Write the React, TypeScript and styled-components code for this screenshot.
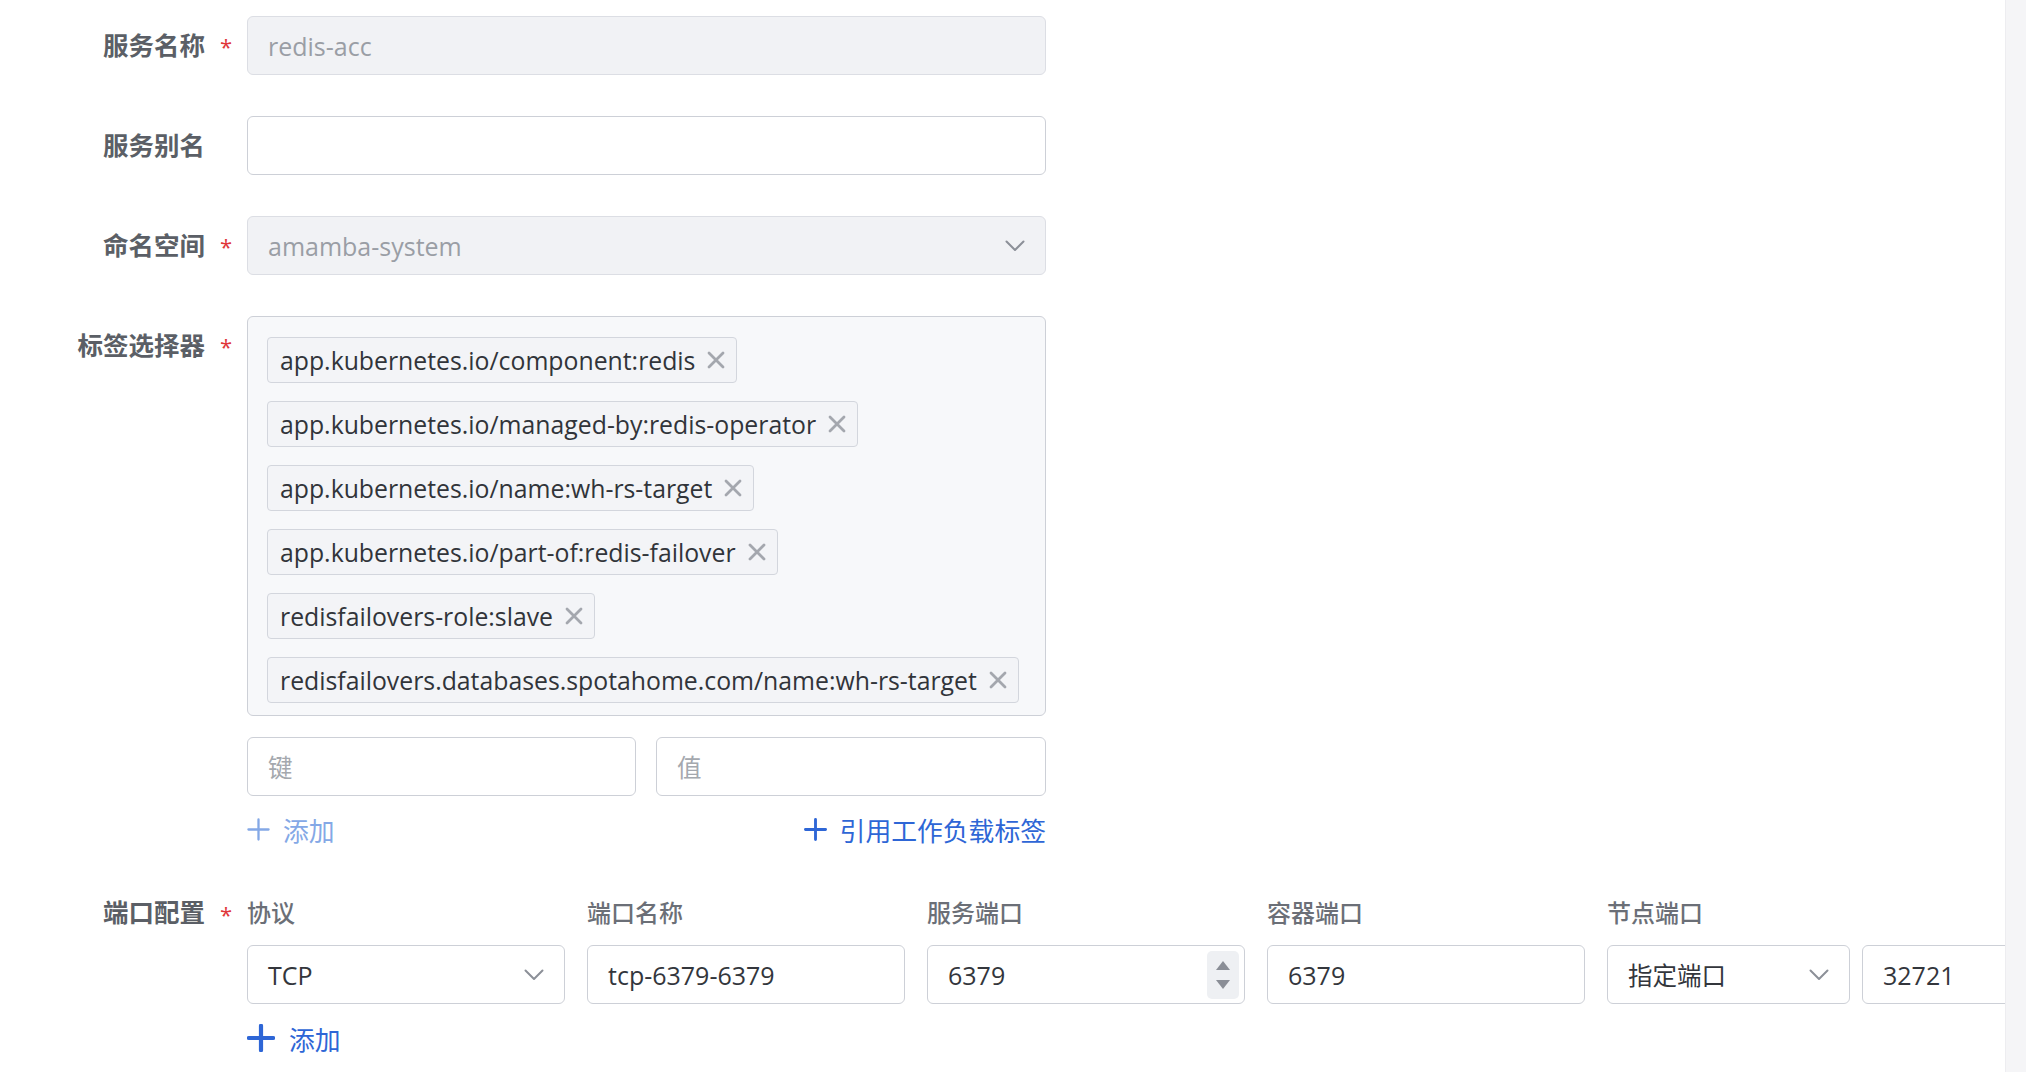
import React from "react";
import styled, { createGlobalStyle } from "styled-components";

const GlobalStyle = createGlobalStyle`
  html, body { margin: 0; padding: 0; background: #ffffff; }
  body {
    font-family: "Open Sans", "Noto Sans CJK SC", sans-serif;
    -webkit-font-smoothing: antialiased;
  }
  * { box-sizing: border-box; }
`;

const Page = styled.div`
  display: flex;
  width: 2026px;
  height: 1072px;
  overflow: hidden;
  background: #fff;
`;

const Main = styled.div`
  flex: 1;
  min-width: 0;
  overflow: hidden;
  padding-top: 16px;
`;

const ScrollTrack = styled.div`
  width: 21px;
  flex: none;
  background: #f5f5f7;
  border-left: 1px solid #ededf0;
`;

const Row = styled.div<{ $mb?: number }>`
  display: grid;
  grid-template-columns: 247px max-content;
  margin-bottom: ${(p) => p.$mb ?? 41}px;
`;

const LabelCell = styled.div<{ $h?: number }>`
  display: flex;
  justify-content: flex-end;
  align-items: center;
  height: ${(p) => p.$h ?? 59}px;
  padding-bottom: 5px;
`;

const LabelText = styled.span`
  font-family: "Noto Sans CJK SC", sans-serif;
  font-size: 25.5px;
  font-weight: 700;
  color: #5b5f66;
`;

const Star = styled.span<{ $show?: boolean }>`
  width: 42px;
  padding-left: 15px;
  font-size: 22px;
  color: #e0363a;
  visibility: ${(p) => (p.$show ? "visible" : "hidden")};
  line-height: 1;
  padding-top: 6px;
`;

const Field = styled.div<{ $disabled?: boolean; $w?: number }>`
  width: ${(p) => p.$w ?? 799}px;
  height: 59px;
  display: flex;
  align-items: center;
  padding: 0 20px;
  border: 1.5px solid ${(p) => (p.$disabled ? "#dcdee4" : "#cdd0d7")};
  border-radius: 6px;
  background: ${(p) => (p.$disabled ? "#f1f2f5" : "#ffffff")};
  font-size: 25px;
  color: ${(p) => (p.$disabled ? "#9a9ea5" : "#33363c")};
  flex: none;
`;

const FieldText = styled.span`
  flex: 1;
  white-space: nowrap;
`;

const Placeholder = styled.span`
  flex: 1;
  font-family: "Noto Sans CJK SC", sans-serif;
  color: #a4a8ae;
  font-size: 24.5px;
`;

const CjkValue = styled.span`
  flex: 1;
  font-family: "Noto Sans CJK SC", sans-serif;
  color: #33363c;
  font-size: 24.5px;
`;

const Column = styled.div`
  display: flex;
  flex-direction: column;
`;

const TagBox = styled.div`
  width: 799px;
  border: 1.5px solid #cdd0d7;
  border-radius: 6px;
  background: #f7f8fa;
  padding: 20px 19px 12px;
  display: flex;
  flex-direction: column;
  align-items: flex-start;
  gap: 18px;
`;

const Tag = styled.div`
  display: inline-flex;
  align-items: center;
  height: 46px;
  padding: 0 11px 0 12px;
  gap: 12px;
  border: 1.5px solid #d3d6dd;
  border-radius: 4px;
  background: #f3f4f7;
  font-size: 24.8px;
  color: #31343a;
  white-space: nowrap;
`;

const KVRow = styled.div`
  display: flex;
  gap: 20px;
  margin-top: 21px;
`;

const LinkRow = styled.div`
  display: flex;
  justify-content: space-between;
  align-items: center;
  height: 40px;
  margin-top: 13px;
  width: 799px;
`;

const Link = styled.span<{ $muted?: boolean; $gap?: number }>`
  display: inline-flex;
  align-items: center;
  gap: ${(p) => p.$gap ?? 13}px;
  font-family: "Noto Sans CJK SC", sans-serif;
  font-size: 25.8px;
  color: ${(p) => (p.$muted ? "#84a8e6" : "#2e66d6")};
`;

const PortRow = styled.div`
  display: grid;
  grid-template-columns: 247px max-content;
  margin-top: 44px;
`;

const PortColumns = styled.div`
  display: flex;
  gap: 22px;
`;

const PortCol = styled.div`
  display: flex;
  flex-direction: column;
  gap: 12px;
`;

const ColHead = styled.div`
  height: 40px;
  display: flex;
  align-items: center;
  padding-bottom: 4px;
  font-family: "Noto Sans CJK SC", sans-serif;
  font-size: 24px;
  font-weight: 500;
  color: #6b6f77;
`;

const Inline = styled.div`
  display: flex;
  gap: 12px;
`;

const Spinner = styled.div`
  width: 32px;
  height: 48px;
  margin-right: -15px;
  background: #eef0f3;
  border-radius: 5px;
  display: flex;
  flex-direction: column;
  align-items: center;
  justify-content: center;
  gap: 10px;
`;

const BottomAdd = styled.div`
  margin-top: 14px;
  height: 40px;
  display: flex;
  align-items: center;
`;

const Chevron = () => (
  <svg width="20" height="12" viewBox="0 0 20 12">
    <polyline points="1.5,1.5 10,10 18.5,1.5" fill="none" stroke="#8c9098" strokeWidth="2" strokeLinecap="round" strokeLinejoin="round" />
  </svg>
);

const Close = () => (
  <svg width="18" height="18" viewBox="0 0 18 18">
    <path d="M2 2 L16 16 M16 2 L2 16" stroke="#a4a7ae" strokeWidth="2.8" strokeLinecap="round" />
  </svg>
);

const Plus = ({ color, w, size }: { color: string; w: number; size: number }) => (
  <svg width={size} height={size} viewBox="0 0 24 24">
    <path d="M12 1.5 V22.5 M1.5 12 H22.5" stroke={color} strokeWidth={w} strokeLinecap="round" />
  </svg>
);

const tags = [
  "app.kubernetes.io/component:redis",
  "app.kubernetes.io/managed-by:redis-operator",
  "app.kubernetes.io/name:wh-rs-target",
  "app.kubernetes.io/part-of:redis-failover",
  "redisfailovers-role:slave",
  "redisfailovers.databases.spotahome.com/name:wh-rs-target",
];

export default function App() {
  return (
    <Page>
      <GlobalStyle />
      <Main>
        <Row>
          <LabelCell>
            <LabelText>服务名称</LabelText>
            <Star $show>*</Star>
          </LabelCell>
          <Field $disabled>
            <FieldText>redis-acc</FieldText>
          </Field>
        </Row>
        <Row>
          <LabelCell>
            <LabelText>服务别名</LabelText>
            <Star>*</Star>
          </LabelCell>
          <Field />
        </Row>
        <Row>
          <LabelCell>
            <LabelText>命名空间</LabelText>
            <Star $show>*</Star>
          </LabelCell>
          <Field $disabled>
            <FieldText>amamba-system</FieldText>
            <Chevron />
          </Field>
        </Row>
        <Row $mb={0}>
          <LabelCell>
            <LabelText>标签选择器</LabelText>
            <Star $show>*</Star>
          </LabelCell>
          <Column>
            <TagBox>
              {tags.map((t) => (
                <Tag key={t}>
                  {t}
                  <Close />
                </Tag>
              ))}
            </TagBox>
            <KVRow>
              <Field $w={389}>
                <Placeholder>键</Placeholder>
              </Field>
              <Field $w={390}>
                <Placeholder>值</Placeholder>
              </Field>
            </KVRow>
            <LinkRow>
              <Link $muted>
                <Plus color="#84a8e6" w={2.4} size={23} />
                添加
              </Link>
              <Link>
                <Plus color="#2e66d6" w={3} size={23} />
                引用工作负载标签
              </Link>
            </LinkRow>
          </Column>
        </Row>
        <PortRow>
          <LabelCell $h={40}>
            <LabelText>端口配置</LabelText>
            <Star $show>*</Star>
          </LabelCell>
          <Column>
            <PortColumns>
              <PortCol>
                <ColHead>协议</ColHead>
                <Field $w={318}>
                  <FieldText>TCP</FieldText>
                  <Chevron />
                </Field>
              </PortCol>
              <PortCol>
                <ColHead>端口名称</ColHead>
                <Field $w={318}>
                  <FieldText>tcp-6379-6379</FieldText>
                </Field>
              </PortCol>
              <PortCol>
                <ColHead>服务端口</ColHead>
                <Field $w={318}>
                  <FieldText>6379</FieldText>
                  <Spinner>
                    <svg width="14" height="9" viewBox="0 0 14 9">
                      <polygon points="7,0 14,9 0,9" fill="#8a8e96" />
                    </svg>
                    <svg width="14" height="9" viewBox="0 0 14 9">
                      <polygon points="0,0 14,0 7,9" fill="#8a8e96" />
                    </svg>
                  </Spinner>
                </Field>
              </PortCol>
              <PortCol>
                <ColHead>容器端口</ColHead>
                <Field $w={318}>
                  <FieldText>6379</FieldText>
                </Field>
              </PortCol>
              <PortCol>
                <ColHead>节点端口</ColHead>
                <Inline>
                  <Field $w={243}>
                    <CjkValue>指定端口</CjkValue>
                    <Chevron />
                  </Field>
                  <Field $w={318}>
                    <FieldText>32721</FieldText>
                  </Field>
                </Inline>
              </PortCol>
            </PortColumns>
            <BottomAdd>
              <Link $gap={14}>
                <Plus color="#2e66d6" w={3.6} size={28} />
                添加
              </Link>
            </BottomAdd>
          </Column>
        </PortRow>
      </Main>
      <ScrollTrack />
    </Page>
  );
}
